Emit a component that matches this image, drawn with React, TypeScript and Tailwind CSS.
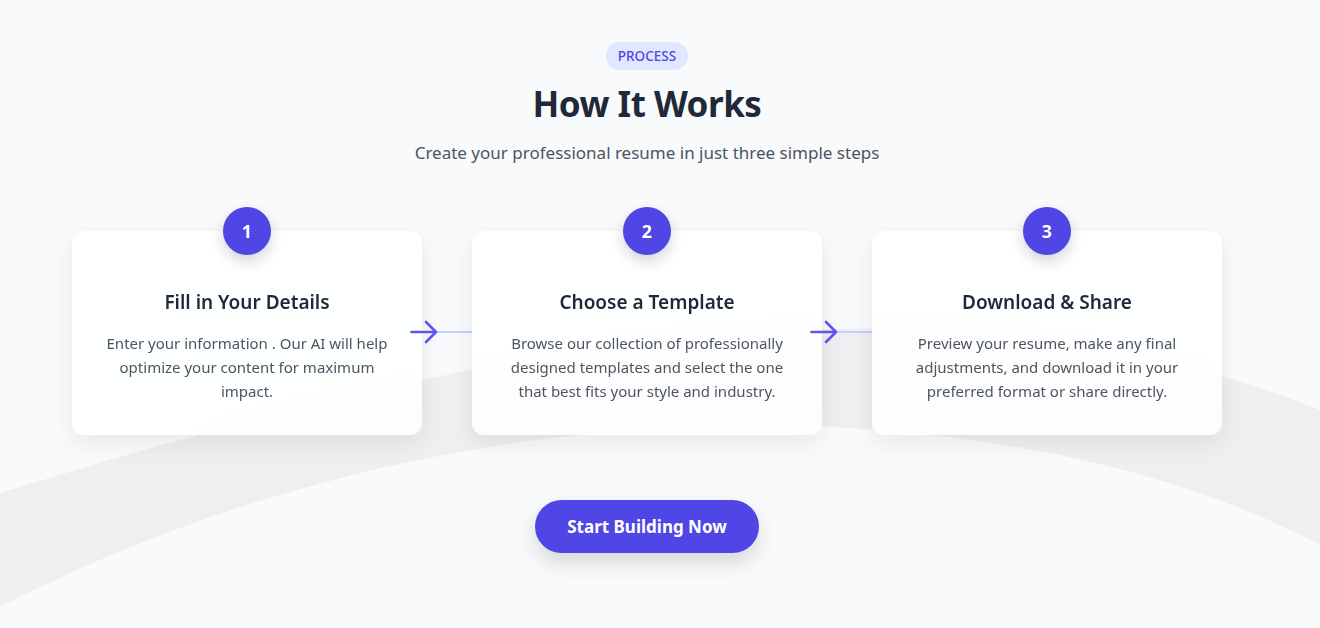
const steps = [
  {
    n: 1,
    title: 'Fill in Your Details',
    text: 'Enter your information . Our AI will help optimize your content for maximum impact.',
  },
  {
    n: 2,
    title: 'Choose a Template',
    text: 'Browse our collection of professionally designed templates and select the one that best fits your style and industry.',
  },
  {
    n: 3,
    title: 'Download & Share',
    text: 'Preview your resume, make any final adjustments, and download it in your preferred format or share directly.',
  },
]

function Connector() {
  return (
    <div className="absolute top-[90px] right-[-50px] z-10 flex h-[22px] w-[62px] items-center">
      <div className="absolute right-0 left-[4px] h-[2px] bg-[#c7cdfd]" />
      <svg
        width="28"
        height="24"
        viewBox="0 0 28 24"
        fill="none"
        stroke="#5b57ea"
        strokeWidth="2.6"
        strokeLinecap="round"
        strokeLinejoin="round"
        className="relative"
      >
        <path d="M1.5 12H26M16 2l10 10-10 10" />
      </svg>
    </div>
  )
}

function StepCard({ n, title, text, last }: { n: number; title: string; text: string; last: boolean }) {
  return (
    <div className="relative w-[350px] rounded-xl bg-white/85 px-8 pt-[57px] pb-8 text-center shadow-[0_8px_24px_rgba(17,24,39,0.08)] backdrop-blur-sm">
      <div className="absolute top-[-24px] left-1/2 flex h-12 w-12 -translate-x-1/2 items-center justify-center rounded-full bg-[#4f46e5] text-lg font-bold text-white shadow-[0_6px_14px_rgba(17,24,39,0.18)]">
        {n}
      </div>
      <h3 className="text-[19px] leading-7 font-semibold text-[#1f2937]">{title}</h3>
      <p className="mt-[15px] text-[15px] leading-6 text-[#4b5563]">{text}</p>
      {!last && <Connector />}
    </div>
  )
}

export default function App() {
  return (
    <div
      className="relative h-[628px] w-full overflow-hidden bg-[#f9fafb]"
      style={{ fontFamily: '"Noto Sans", "Open Sans", sans-serif' }}
    >
      <svg
        className="absolute inset-0 h-full w-full"
        viewBox="0 0 1320 628"
        preserveAspectRatio="none"
      >
        <path
          d="M0 493C400 370 900 240 1320 410L1320 545C1050 400 500 350 0 607Z"
          fill="#efeff1"
        />
      </svg>

      <div className="relative flex flex-col items-center pt-[42px] pr-[26px]">
        <span className="rounded-full bg-[#e0e7ff] px-3 py-[5px] text-[13.5px] leading-[18px] font-medium text-[#4f46e5]">
          PROCESS
        </span>
        <h2 className="mt-[14px] text-[35px] leading-10 font-bold tracking-[-0.5px] text-[#1f2937]">
          How It Works
        </h2>
        <p className="mt-[15px] text-[17px] leading-7 text-[#4b5563]">
          Create your professional resume in just three simple steps
        </p>

        <div className="mt-16 flex gap-[50px]">
          {steps.map((s, i) => (
            <StepCard key={s.n} {...s} last={i === steps.length - 1} />
          ))}
        </div>

        <button className="mt-[65px] h-[53px] rounded-full bg-[#4f46e5] px-8 text-[17px] font-bold text-white shadow-[0_10px_20px_rgba(17,24,39,0.15)]">
          Start Building Now
        </button>
      </div>
    </div>
  )
}
